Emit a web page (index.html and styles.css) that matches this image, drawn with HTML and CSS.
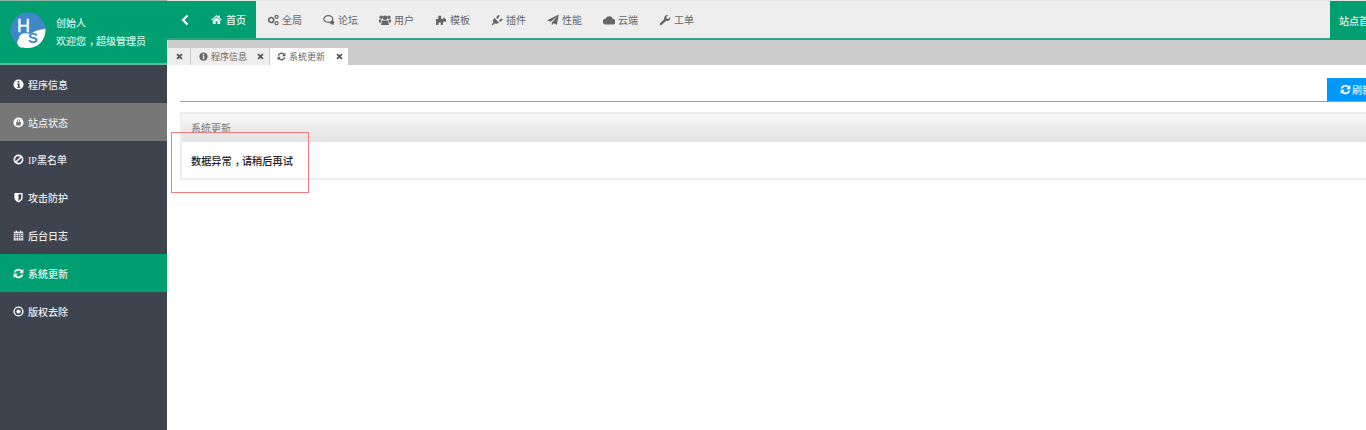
FILE: index.html
```html
<!DOCTYPE html>
<html lang="zh-CN">
<head>
<meta charset="utf-8">
<title>系统更新</title>
<link rel="stylesheet" href="styles.css">
</head>
<body>
<div class="app">
  <aside class="side">
    <div class="user">
      <svg class="avatar" viewBox="0 0 36 36" width="36" height="36"><circle cx="18" cy="18" r="17.500" fill="#3f87c9"/><path d="M11 35.500c-4-1-5-6-2-9 0-4 4-6 9-5 3 1 6-2 9-3 3-1 6-1 8.500-2 .5 10-6 19.500-17.500 19.500-3 0-5-.2-7-.5z" fill="#fff"/><text x="7" y="20" class="av-h">H</text><text x="18" y="30.500" class="av-s">S</text></svg>
      <div class="user-text"><div>创始人</div><div>欢迎您<span class="cm">，</span>超级管理员</div></div>
    </div>
    <nav class="menu">
      <a class="mi"><svg class="ic" viewBox="0 0 12 12"><circle cx="6" cy="6" r="5.500" fill="#fff"/><path d="M5 2.300h2v1.500H5zM4.600 5h2.600v3.600h.8v1H4.400v-1h.9V6h-.7z" fill="#3e444e"/></svg>程序信息</a>
      <a class="mi mi-gray"><svg class="ic" viewBox="0 0 12 12"><circle cx="6" cy="6" r="5.500" fill="#fff"/><path d="M3.400 5.500h5.200v3.800H3.400zM4.300 5.500V4.200a1.700 1.700 0 0 1 3.400 0v1.300H6.800V4.200a.8.8 0 0 0-1.600 0v1.300z" fill="#777"/></svg>站点状态</a>
      <a class="mi"><svg class="ic" viewBox="0 0 12 12"><circle cx="6" cy="6" r="4.500" fill="none" stroke="#fff" stroke-width="1.800"/><path d="M3 9l6-6" stroke="#fff" stroke-width="1.600"/></svg><span><span class="latin">IP</span>黑名单</span></a>
      <a class="mi"><svg class="ic" viewBox="0 0 12 12"><path d="M1.500 1h9v5.500c0 2.500-2.800 4-4.500 5-1.700-1-4.500-2.500-4.500-5z" fill="#fff"/><path d="M6 2.500v7.300c1.200-.7 3-1.800 3-3.400V2.500z" fill="#3e444e"/></svg>攻击防护</a>
      <a class="mi"><svg class="ic" viewBox="0 0 12 12"><path d="M.8 1.800h10.400v9.700H.8z" fill="#e6e0f0"/><path d="M3 .5h1.200v2.500H3zM7.800 .5H9v2.500H7.800z" fill="#fff"/><path d="M.8 3.800h10.400M.8 6h10.400M.8 8.200h10.400M3.400 3.800v7.700M6 3.800v7.700M8.600 3.800v7.700" stroke="#3e444e" stroke-width=".6"/></svg>后台日志</a>
      <a class="mi mi-on"><svg class="ic" viewBox="0 0 12 12"><path d="M.8 5A5.200 5.200 0 0 1 9.700 2.400L11.300 1V5.700H6.800L8.500 4A3.200 3.200 0 0 0 2.900 5zM11.200 7A5.200 5.200 0 0 1 2.300 9.600L.7 11V6.300H5.200L3.500 8A3.200 3.200 0 0 0 9.100 7z" fill="#fff"/></svg>系统更新</a>
      <a class="mi"><svg class="ic" viewBox="0 0 12 12"><circle cx="6" cy="6" r="4.800" fill="none" stroke="#fff" stroke-width="1.500"/><circle cx="6" cy="6" r="2.300" fill="#fff"/></svg>版权去除</a>
    </nav>
  </aside>
  <main class="main">
    <header class="top">
      <div class="home">
        <a class="back"><svg viewBox="0 0 8 12" width="8" height="12"><path d="M6.500 1.500L2 6l4.500 4.500" fill="none" stroke="#fff" stroke-width="2.200"/></svg></a>
        <a class="nav nav-on"><svg class="ic-h" viewBox="0 0 12 12"><path d="M6 1L.3 6.200l.7.800L6 2.800 11 7l.7-.8-2.200-2V1.500H8v1.400zM2 7.200V11h3V8h2v3h3V7.200L6 3.800z" fill="#fff"/></svg>首页</a>
      </div>
      <a class="nav"><svg class="ic-n" viewBox="0 0 12 12"><circle cx="4.200" cy="6" r="2.500" fill="none" stroke="#666" stroke-width="1.700"/><circle cx="9.600" cy="2.800" r="1.500" fill="none" stroke="#666" stroke-width="1.300"/><circle cx="9.600" cy="9.200" r="1.500" fill="none" stroke="#666" stroke-width="1.300"/></svg>全局</a>
      <a class="nav"><svg class="ic-n" viewBox="0 0 12 12"><ellipse cx="5.300" cy="5" rx="4.500" ry="3.300" fill="none" stroke="#666" stroke-width="1.300"/><path d="M9.500 6c2 1.200 2.200 3 1 4l.8 1-3-.7L6.500 9z" fill="#666"/></svg>论坛</a>
      <a class="nav"><svg class="ic-n" viewBox="0 0 12 12"><circle cx="6" cy="3.800" r="2.300" fill="#666"/><circle cx="2.200" cy="3.300" r="1.700" fill="#666"/><circle cx="9.800" cy="3.300" r="1.700" fill="#666"/><path d="M3 6.500h6l1 4.500H2zM0 5.500h2.400L2 8.500H0zM9.600 5.500H12v3h-2z" fill="#666"/></svg>用户</a>
      <a class="nav"><svg class="ic-n" viewBox="0 0 12 12"><path d="M1 5h2.200V1.800h3V5H8V3.800h1.800V5H11v2.800H8V11H5.800V8.500H3.500V11H1z" fill="#666"/></svg>模板</a>
      <a class="nav"><svg class="ic-n" viewBox="0 0 12 12"><path d="M3.500 4l4.500 4.500c-1.500 1.500-3.500 1.500-4.500.7L1.500 11.500.5 10.500l2-2c-.9-1-.7-3 1-4.500zM5 3.600L7.500.8l1.300 1L6.400 5zM8 6.600l2.800-2.400 1 1.300L9.200 8z" fill="#666"/></svg>插件</a>
      <a class="nav"><svg class="ic-n" viewBox="0 0 12 12"><path d="M11.800 .5L9.900 10.800 6.500 9.200 4.800 11.500V8.500l5.500-6.300-6.700 5.500L.2 6.200z" fill="#666"/></svg>性能</a>
      <a class="nav"><svg class="ic-n" viewBox="0 0 12 12"><path d="M3 10.500h6.400a2.700 2.700 0 0 0 .6-5.400A3.900 3.900 0 0 0 2.700 4.500 3 3 0 0 0 3 10.500z" fill="#666"/></svg>云端</a>
      <a class="nav"><svg class="ic-n" viewBox="0 0 12 12"><path d="M.9 9.500L5.300 5c-.6-2.200 1.200-4.400 4-3.900L7.300 3.100l.4 1.500 1.500.4 2-2c.6 3-1.800 4.700-4.100 3.900L2.500 11c-1 .7-2.300-.5-1.600-1.500z" fill="#666"/></svg>工单</a>
      <a class="site">站点首页</a>
    </header>
    <div class="tabs">
      <a class="tab tab-x"><svg class="x" viewBox="0 0 8 8"><path d="M1.200 1.200l5.600 5.600M6.800 1.200L1.200 6.800" stroke="#555" stroke-width="2"/></svg></a>
      <a class="tab"><svg class="ic-t" viewBox="0 0 12 12"><circle cx="6" cy="6" r="5.500" fill="#666"/><path d="M5 2.400h2v1.800H5zM5 5h2v4.600H5z" fill="#eee"/></svg>程序信息<svg class="x x-r" viewBox="0 0 8 8"><path d="M1.200 1.200l5.600 5.600M6.800 1.200L1.200 6.800" stroke="#555" stroke-width="2"/></svg></a>
      <a class="tab tab-on"><svg class="ic-t" viewBox="0 0 12 12"><path d="M.8 5A5.200 5.200 0 0 1 9.700 2.400L11.300 1V5.700H6.800L8.500 4A3.200 3.200 0 0 0 2.900 5zM11.200 7A5.200 5.200 0 0 1 2.300 9.600L.7 11V6.300H5.200L3.500 8A3.200 3.200 0 0 0 9.100 7z" fill="#666"/></svg>系统更新<svg class="x x-r" viewBox="0 0 8 8"><path d="M1.200 1.200l5.600 5.600M6.800 1.200L1.200 6.800" stroke="#555" stroke-width="2"/></svg></a>
    </div>
    <div class="content">
      <div class="tool">
        <a class="btn"><svg class="ic" viewBox="0 0 12 12"><path d="M.8 5A5.200 5.200 0 0 1 9.700 2.400L11.300 1V5.700H6.800L8.500 4A3.200 3.200 0 0 0 2.900 5zM11.200 7A5.200 5.200 0 0 1 2.300 9.600L.7 11V6.300H5.200L3.500 8A3.200 3.200 0 0 0 9.100 7z" fill="#fff"/></svg>刷新</a>
      </div>
      <section class="panel">
        <div class="panel-h">系统更新</div>
        <div class="panel-b">数据异常<span class="cm">，</span>请稍后再试</div>
      </section>
    </div>
  </main>
  <div class="redbox"></div>
</div>
</body>
</html>
```

FILE: styles.css
```css
* { box-sizing: border-box; }
html, body { margin: 0; height: 100%; overflow: hidden; }
body { font-family: "Noto Sans CJK SC", "Liberation Sans", sans-serif; font-size: 10px; color: #333; background: #fff; }
.app { display: flex; width: 1366px; height: 430px; position: relative; overflow: hidden; }
.cm { padding-left: 3px; letter-spacing: -3px; }
.side { width: 167px; flex: none; background: #3e444e; }
.user { height: 65.4px; background: #009f72; border-top: 1px solid #8fb5a5; border-bottom: 2px solid #5fbb9c; display: flex; align-items: flex-start; padding-left: 10px; gap: 10px; color: #d7f2e8; font-weight: 500; }
.avatar { flex: none; margin-top: 11px; }
.av-h { font: 18px "Liberation Sans", sans-serif; fill: #fff; stroke: #fff; stroke-width: .4px; }
.av-s { font: bold 15px "Liberation Sans", sans-serif; fill: #3f87c9; }
.user-text { line-height: 18px; margin-top: 13px; }
.menu { display: flex; flex-direction: column; }
.mi { height: 37.8px; display: flex; align-items: center; padding-left: 13px; gap: 4px; color: #e8eaec; font-weight: 500; }
.mi-gray { background: #777; }
.mi-on { background: #009f72; color: #e6f7f0; }
.latin { font-family: "Liberation Serif", serif; }
.ic { width: 11px; height: 11px; flex: none; }
.ic-n { width: 12px; height: 12px; flex: none; }
.ic-h { width: 11px; height: 11px; flex: none; }
.ic-t { width: 9px; height: 9px; flex: none; }
.main { flex: 1; min-width: 0; }
.top { height: 40px; background: #eee; border-bottom: 2px solid #2aa382; border-top: 1px solid #e4e4e4; display: flex; align-items: center; color: #666; }
.home { width: 89px; height: 37px; flex: none; background: #009f72; display: flex; align-items: center; padding-left: 14px; }
.back { width: 30px; flex: none; display: flex; align-items: center; }
.nav { height: 37px; display: flex; align-items: center; gap: 3px; padding: 0 0 0 11px; width: 56px; flex: none; white-space: nowrap; }
.nav-on { color: #e9f8f2; width: 45px; padding-left: 0; gap: 4px; font-weight: 500; }
.site { margin-left: auto; width: 36px; height: 39px; align-self: flex-start; background: #009f72; color: #e6f7f0; display: flex; align-items: center; padding-left: 9px; white-space: nowrap; overflow: hidden; font-weight: 500; }
.tabs { height: 25px; margin-left: 1px; background: #ccc; display: flex; align-items: flex-end; gap: 1px; }
.tab { height: 17px; width: 78px; background: #eee; display: flex; align-items: center; gap: 3px; color: #666; font-size: 9px; padding-left: 8px; white-space: nowrap; }
.tab-x { width: 22px; }
.tab-on { background: #fff; padding-left: 7px; }
.x { width: 7px; height: 7px; flex: none; }
.x-r { margin-left: auto; margin-right: 5px; }
.content { margin-left: 1px; padding-left: 12px; }
.tool { height: 37px; border-bottom: 1px solid #5aaee9; display: flex; justify-content: flex-end; align-items: flex-end; }
.btn { width: 39px; height: 23px; background: #0097ff; color: #d9efff; display: flex; align-items: center; gap: 1px; padding-left: 13px; overflow: hidden; white-space: nowrap; flex: none; font-weight: 500; }
.panel { margin-top: 10px; border: 2px solid #eee; border-right: 0; height: 68px; }
.panel-h { height: 28px; padding: 5px 0 0 9px; background: linear-gradient(#f8f8f8, #e2e2e2); color: #777; line-height: 17px; }
.panel-b { padding: 11px 0 0 9px; color: #222; line-height: 16px; font-size: 10.2px; font-weight: 500; }
.redbox { position: absolute; left: 171px; top: 132px; width: 138px; height: 61px; border: 1px solid #f57c7c; }
```
